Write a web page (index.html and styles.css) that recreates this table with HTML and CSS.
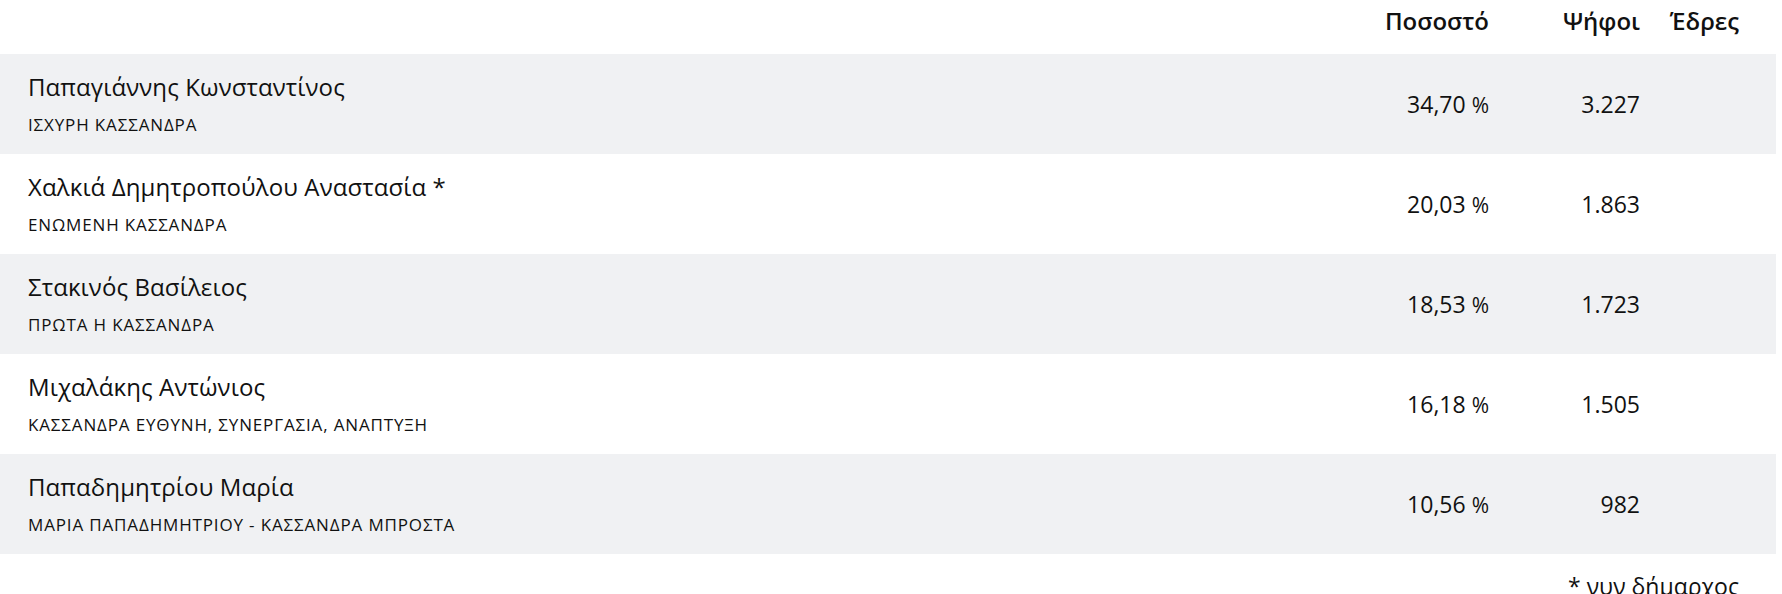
FILE: index.html
```html
<!DOCTYPE html>
<html lang="el">
<head>
<meta charset="utf-8">
<title>Αποτελέσματα</title>
<link rel="stylesheet" href="styles.css">
</head>
<body>
<div class="results">
  <div class="row head">
    <div class="cell name"></div>
    <div class="cell num">Ποσοστό</div>
    <div class="cell num">Ψήφοι</div>
    <div class="cell num">Έδρες</div>
  </div>
  <div class="row alt">
    <div class="cell name"><div class="cand">Παπαγιάννης Κωνσταντίνος</div><div class="party">ΙΣΧΥΡΗ ΚΑΣΣΑΝΔΡΑ</div></div>
    <div class="cell num">34,70 <span class="pct">%</span></div>
    <div class="cell num">3.227</div>
    <div class="cell num"></div>
  </div>
  <div class="row">
    <div class="cell name"><div class="cand">Χαλκιά Δημητροπούλου Αναστασία *</div><div class="party">ΕΝΩΜΕΝΗ ΚΑΣΣΑΝΔΡΑ</div></div>
    <div class="cell num">20,03 <span class="pct">%</span></div>
    <div class="cell num">1.863</div>
    <div class="cell num"></div>
  </div>
  <div class="row alt">
    <div class="cell name"><div class="cand">Στακινός Βασίλειος</div><div class="party">ΠΡΩΤΑ Η ΚΑΣΣΑΝΔΡΑ</div></div>
    <div class="cell num">18,53 <span class="pct">%</span></div>
    <div class="cell num">1.723</div>
    <div class="cell num"></div>
  </div>
  <div class="row">
    <div class="cell name"><div class="cand">Μιχαλάκης Αντώνιος</div><div class="party">ΚΑΣΣΑΝΔΡΑ ΕΥΘΥΝΗ, ΣΥΝΕΡΓΑΣΙΑ, ΑΝΑΠΤΥΞΗ</div></div>
    <div class="cell num">16,18 <span class="pct">%</span></div>
    <div class="cell num">1.505</div>
    <div class="cell num"></div>
  </div>
  <div class="row alt">
    <div class="cell name"><div class="cand">Παπαδημητρίου Μαρία</div><div class="party">ΜΑΡΙΑ ΠΑΠΑΔΗΜΗΤΡΙΟΥ - ΚΑΣΣΑΝΔΡΑ ΜΠΡΟΣΤΑ</div></div>
    <div class="cell num">10,56 <span class="pct">%</span></div>
    <div class="cell num">982</div>
    <div class="cell num"></div>
  </div>
  <div class="note">* νυν δήμαρχος</div>
</div>
</body>
</html>
```

FILE: styles.css
```css
html, body {
  margin: 0;
  padding: 0;
  background: #ffffff;
}

body {
  font-family: "Open Sans", "Noto Sans", sans-serif;
  color: #111111;
}

.results {
  margin-right: 6px;
}

.row {
  display: grid;
  grid-template-columns: 1fr 200px 151px 99px;
  align-items: center;
  height: 100px;
  padding: 0 37px 0 28px;
}

.row.alt {
  background: #f0f1f3;
}

.row.head {
  height: 54px;
  align-items: start;
  padding-top: 5px;
  box-sizing: border-box;
  font-weight: 600;
}

.row.head .cell {
  font-size: 24px;
}

.cell {
  font-size: 23px;
  line-height: 32px;
}

.num {
  text-align: right;
  white-space: nowrap;
}

.cand {
  font-size: 24px;
  line-height: 32px;
  letter-spacing: 0.1px;
}

.party {
  font-size: 17px;
  line-height: 24px;
  letter-spacing: 0.85px;
  margin-top: 10px;
}

.pct {
  font-size: 21px;
}

.note {
  text-align: right;
  padding-right: 37px;
  margin-top: 16px;
  font-size: 23px;
  line-height: 32px;
}
```
